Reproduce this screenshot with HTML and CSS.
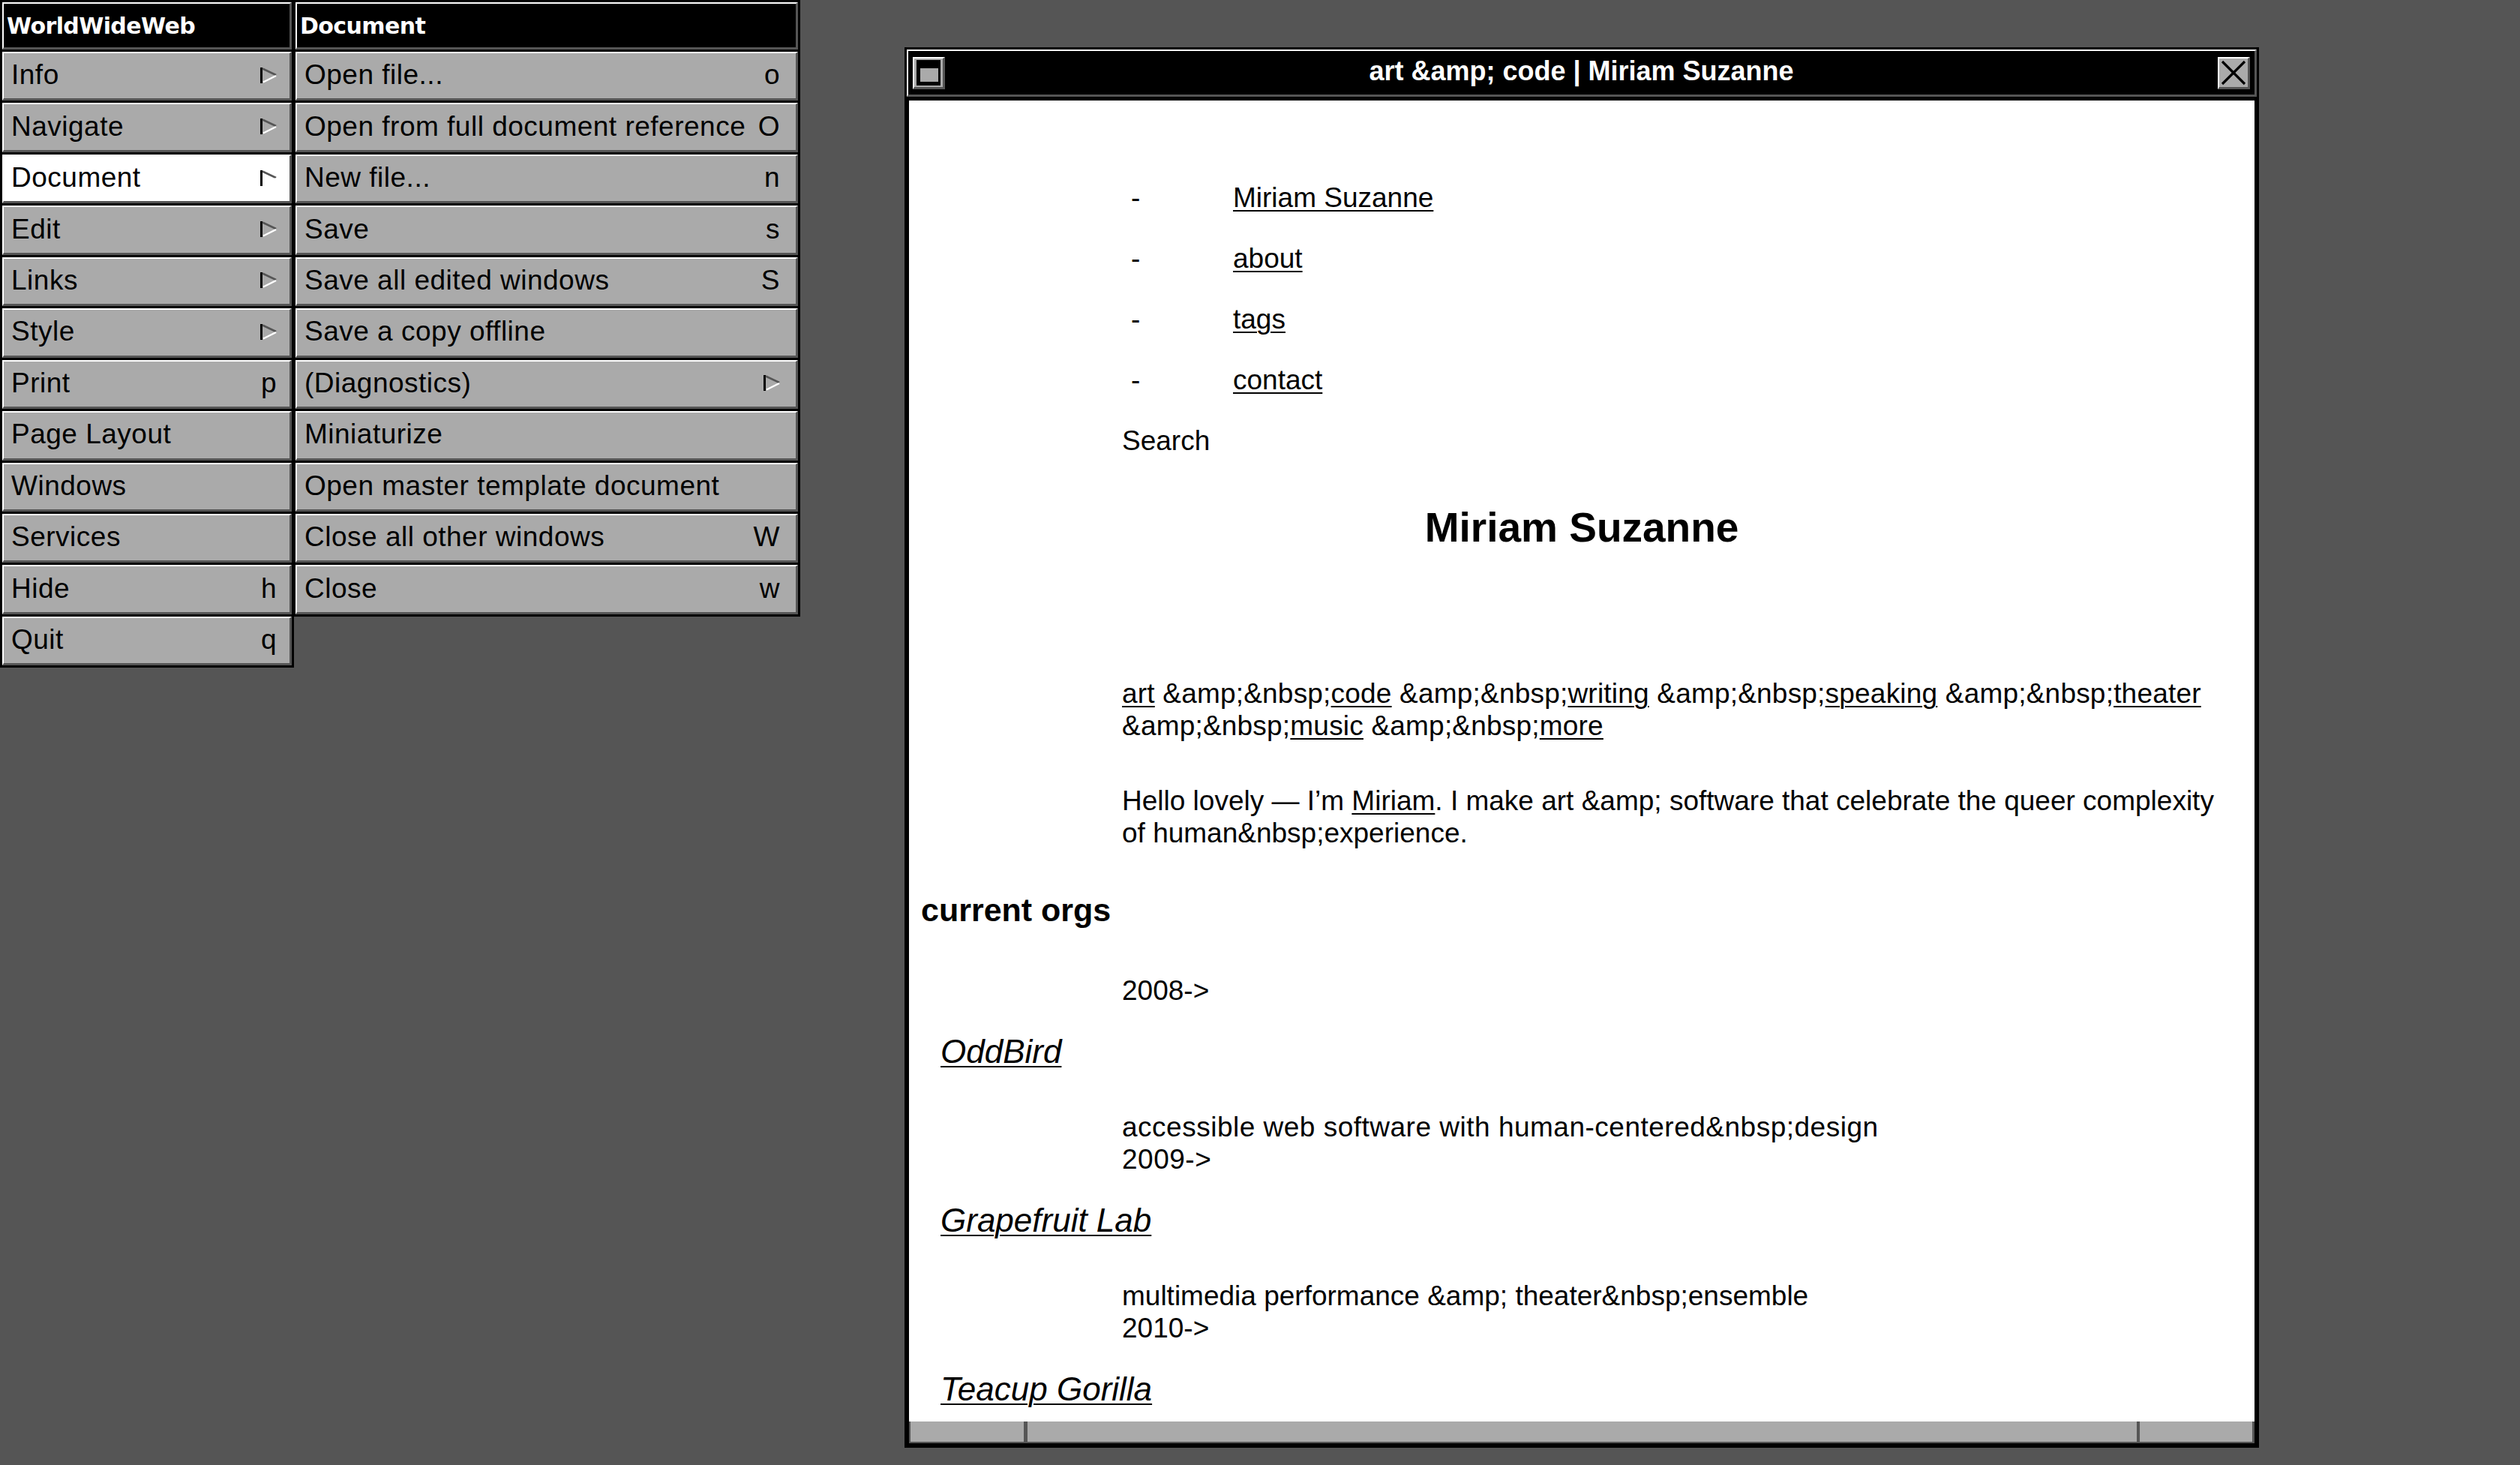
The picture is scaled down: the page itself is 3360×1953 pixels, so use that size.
FILE: index.html
```html
<!DOCTYPE html>
<html lang="en">
<head>
<meta charset="utf-8">
<title>WorldWideWeb</title>
<link rel="stylesheet" href="styles.css">
</head>
<body>
<div class="menu menu-main">
  <div class="menu-title">WorldWideWeb</div>
  <div class="menu-item"><span>Info</span><svg class="arrow" width="22" height="21" viewBox="0 0 22 21"><line x1="1.5" y1="0" x2="1.5" y2="21" stroke="#000" stroke-width="3"/><line x1="3" y1="1.5" x2="21" y2="10" stroke="#555" stroke-width="2.5"/><line x1="4" y1="19.5" x2="21" y2="11" stroke="#fff" stroke-width="2.5"/></svg></div>
  <div class="menu-item"><span>Navigate</span><svg class="arrow" width="22" height="21" viewBox="0 0 22 21"><line x1="1.5" y1="0" x2="1.5" y2="21" stroke="#000" stroke-width="3"/><line x1="3" y1="1.5" x2="21" y2="10" stroke="#555" stroke-width="2.5"/><line x1="4" y1="19.5" x2="21" y2="11" stroke="#fff" stroke-width="2.5"/></svg></div>
  <div class="menu-item selected"><span>Document</span><svg class="arrow" width="22" height="21" viewBox="0 0 22 21"><line x1="1.5" y1="0" x2="1.5" y2="21" stroke="#000" stroke-width="3"/><line x1="3" y1="1.5" x2="21" y2="10" stroke="#555" stroke-width="2.5"/><line x1="4" y1="19.5" x2="21" y2="11" stroke="#fff" stroke-width="2.5"/></svg></div>
  <div class="menu-item"><span>Edit</span><svg class="arrow" width="22" height="21" viewBox="0 0 22 21"><line x1="1.5" y1="0" x2="1.5" y2="21" stroke="#000" stroke-width="3"/><line x1="3" y1="1.5" x2="21" y2="10" stroke="#555" stroke-width="2.5"/><line x1="4" y1="19.5" x2="21" y2="11" stroke="#fff" stroke-width="2.5"/></svg></div>
  <div class="menu-item"><span>Links</span><svg class="arrow" width="22" height="21" viewBox="0 0 22 21"><line x1="1.5" y1="0" x2="1.5" y2="21" stroke="#000" stroke-width="3"/><line x1="3" y1="1.5" x2="21" y2="10" stroke="#555" stroke-width="2.5"/><line x1="4" y1="19.5" x2="21" y2="11" stroke="#fff" stroke-width="2.5"/></svg></div>
  <div class="menu-item"><span>Style</span><svg class="arrow" width="22" height="21" viewBox="0 0 22 21"><line x1="1.5" y1="0" x2="1.5" y2="21" stroke="#000" stroke-width="3"/><line x1="3" y1="1.5" x2="21" y2="10" stroke="#555" stroke-width="2.5"/><line x1="4" y1="19.5" x2="21" y2="11" stroke="#fff" stroke-width="2.5"/></svg></div>
  <div class="menu-item"><span>Print</span><span class="key">p</span></div>
  <div class="menu-item"><span>Page Layout</span></div>
  <div class="menu-item"><span>Windows</span></div>
  <div class="menu-item"><span>Services</span></div>
  <div class="menu-item"><span>Hide</span><span class="key">h</span></div>
  <div class="menu-item"><span>Quit</span><span class="key">q</span></div>
</div>

<div class="menu menu-doc">
  <div class="menu-title">Document</div>
  <div class="menu-item"><span>Open file...</span><span class="key">o</span></div>
  <div class="menu-item"><span>Open from full document reference</span><span class="key">O</span></div>
  <div class="menu-item"><span>New file...</span><span class="key">n</span></div>
  <div class="menu-item"><span>Save</span><span class="key">s</span></div>
  <div class="menu-item"><span>Save all edited windows</span><span class="key">S</span></div>
  <div class="menu-item"><span>Save a copy offline</span></div>
  <div class="menu-item"><span>(Diagnostics)</span><svg class="arrow" width="22" height="21" viewBox="0 0 22 21"><line x1="1.5" y1="0" x2="1.5" y2="21" stroke="#000" stroke-width="3"/><line x1="3" y1="1.5" x2="21" y2="10" stroke="#555" stroke-width="2.5"/><line x1="4" y1="19.5" x2="21" y2="11" stroke="#fff" stroke-width="2.5"/></svg></div>
  <div class="menu-item"><span>Miniaturize</span></div>
  <div class="menu-item"><span>Open master template document</span></div>
  <div class="menu-item"><span>Close all other windows</span><span class="key">W</span></div>
  <div class="menu-item"><span>Close</span><span class="key">w</span></div>
</div>

<div class="window">
  <div class="titlebar">
    <div class="tb-btn"><svg width="38" height="38" viewBox="0 0 38 38"><rect x="3" y="2" width="32" height="34" fill="#000"/><rect x="8" y="13" width="24" height="18" fill="#aaa"/></svg></div>
    <div class="tb-title">art &amp;amp; code | Miriam Suzanne</div>
    <div class="tb-btn"><svg width="38" height="38" viewBox="0 0 38 38"><line x1="4" y1="4" x2="34" y2="34" stroke="#000" stroke-width="3.2"/><line x1="34" y1="4" x2="4" y2="34" stroke="#000" stroke-width="3.2"/></svg></div>
  </div>
  <div class="content">
    <ul class="nav">
      <li><span class="dash">-</span><a href="#">Miriam Suzanne</a></li>
      <li><span class="dash">-</span><a href="#">about</a></li>
      <li><span class="dash">-</span><a href="#">tags</a></li>
      <li><span class="dash">-</span><a href="#">contact</a></li>
    </ul>
    <p class="para">Search</p>
    <h1 class="page-title">Miriam Suzanne</h1>
    <p class="para tagline"><a href="#">art</a> &amp;amp;&amp;nbsp;<a href="#">code</a> &amp;amp;&amp;nbsp;<a href="#">writing</a> &amp;amp;&amp;nbsp;<a href="#">speaking</a> &amp;amp;&amp;nbsp;<a href="#">theater</a><br>&amp;amp;&amp;nbsp;<a href="#">music</a> &amp;amp;&amp;nbsp;<a href="#">more</a></p>
    <p class="para intro">Hello lovely — I’m <a href="#">Miriam</a>. I make art &amp;amp; software that celebrate the queer complexity<br>of human&amp;nbsp;experience.</p>
    <h2 class="section-title">current orgs</h2>
    <p class="para date-first">2008-&gt;</p>
    <h3 class="org"><a href="#">OddBird</a></h3>
    <p class="para org-desc wide">accessible web software with human-centered&amp;nbsp;design<br>2009-&gt;</p>
    <h3 class="org"><a href="#">Grapefruit Lab</a></h3>
    <p class="para org-desc">multimedia performance &amp;amp; theater&amp;nbsp;ensemble<br>2010-&gt;</p>
    <h3 class="org"><a href="#">Teacup Gorilla</a></h3>
  </div>
  <div class="scroller">
    <div class="seg seg-start"></div>
    <div class="seg seg-knob"></div>
    <div class="seg seg-end"></div>
  </div>
</div>
</body>
</html>
```
FILE: styles.css
```css
html, body {
  margin: 0;
  padding: 0;
}

body {
  background: #555555;
  width: 3360px;
  height: 1953px;
  overflow: hidden;
  position: relative;
  font-family: "Liberation Sans", Arial, sans-serif;
  color: #000;
}

/* ---------- NeXT menus ---------- */
.menu {
  position: absolute;
  top: 0;
  background: #000;
  padding: 3px;
  display: flex;
  flex-direction: column;
  gap: 3px;
  box-sizing: border-box;
}

.menu-main {
  left: 0;
  width: 392px;
}

.menu-doc {
  left: 391px;
  width: 676px;
}

.menu-title {
  height: 63px;
  box-sizing: border-box;
  border-style: solid;
  border-width: 2px 3px 3px 2px;
  border-color: #fff #555 #555 #fff;
  background: #000;
  color: #fff;
  font-family: "DejaVu Sans", sans-serif;
  font-weight: bold;
  font-size: 30px;
  letter-spacing: -0.6px;
  display: flex;
  align-items: center;
  padding-left: 4px;
}

.menu-item {
  height: 65.45px;
  box-sizing: border-box;
  border-style: solid;
  border-width: 2px 3px 3px 2px;
  border-color: #fff #555 #555 #fff;
  background: #aaaaaa;
  font-size: 37px;
  letter-spacing: 0.5px;
  display: flex;
  align-items: center;
  justify-content: space-between;
  padding: 0 17px 2px 10px;
  white-space: nowrap;
}

.menu-doc .menu-item {
  padding-right: 21px;
}

.menu-item.selected {
  background: #fff;
}

.arrow {
  display: block;
  flex: none;
}

/* ---------- Window ---------- */
.window {
  position: absolute;
  left: 1206px;
  top: 63px;
  width: 1806px;
  height: 1867px;
  box-sizing: border-box;
  background: #000;
  padding: 3px 3px 6px;
  display: flex;
  flex-direction: column;
}

.titlebar {
  height: 63px;
  flex: none;
  box-sizing: border-box;
  border-style: solid;
  border-width: 2px 3px 3px 2px;
  border-color: #fff #555 #555 #fff;
  background: #000;
  display: flex;
  align-items: center;
  padding: 0 6px 0 6px;
}

.tb-btn {
  width: 43px;
  height: 43px;
  flex: none;
  box-sizing: border-box;
  border-style: solid;
  border-width: 2px 3px 3px 2px;
  border-color: #fff #555 #555 #fff;
  background: #aaaaaa;
  display: flex;
}

.tb-title {
  flex: 1;
  text-align: center;
  color: #fff;
  font-weight: bold;
  font-size: 36px;
  padding-bottom: 5px;
  white-space: nowrap;
}

.content {
  flex: 1;
  min-height: 0;
  margin: 5px 3px 0;
  background: #fff;
  overflow: hidden;
  font-size: 37px;
  line-height: 43px;
  padding-top: 108px;
  box-sizing: border-box;
}

.content a {
  color: #000;
  text-decoration: underline;
  text-decoration-thickness: 2px;
  text-underline-offset: 4px;
}

.nav {
  list-style: none;
  margin: 0;
  padding: 0 0 0 296px;
}

.nav li {
  display: flex;
  margin-bottom: 38px;
}

.nav .dash {
  width: 136px;
  flex: none;
}

.para {
  margin: 0 0 0 284px;
  white-space: nowrap;
}

.tagline {
  letter-spacing: 0.2px;
}

.wide {
  letter-spacing: 0.5px;
}

.page-title {
  margin: 64px 0 0;
  text-align: center;
  font-size: 55px;
  line-height: 60px;
  font-weight: bold;
}

.tagline {
  margin-top: 170px;
}

.intro {
  margin-top: 57px;
}

.section-title {
  margin: 56px 0 0 16px;
  font-size: 43px;
  line-height: 50px;
  font-weight: bold;
}

.date-first {
  margin-top: 61px;
}

.org {
  margin: 35px 0 0 42px;
  font-size: 44px;
  line-height: 50px;
  font-style: italic;
  font-weight: normal;
}

.org-desc {
  margin-top: 54px;
}

/* ---------- Scroller ---------- */
.scroller {
  height: 29px;
  flex: none;
  margin: 0 3px;
  display: flex;
  background: #aaaaaa;
  border-bottom: 2px solid #555;
  box-sizing: border-box;
}

.seg {
  box-sizing: border-box;
  height: 100%;
  border-style: solid;
  border-color: #fff #555;
  border-width: 0 2px 0 2px;
}

.seg-start {
  width: 155px;
}

.seg-knob {
  flex: 1;
  border-left-width: 3px;
}

.seg-end {
  width: 155px;
  border-right-width: 3px;
}
```
